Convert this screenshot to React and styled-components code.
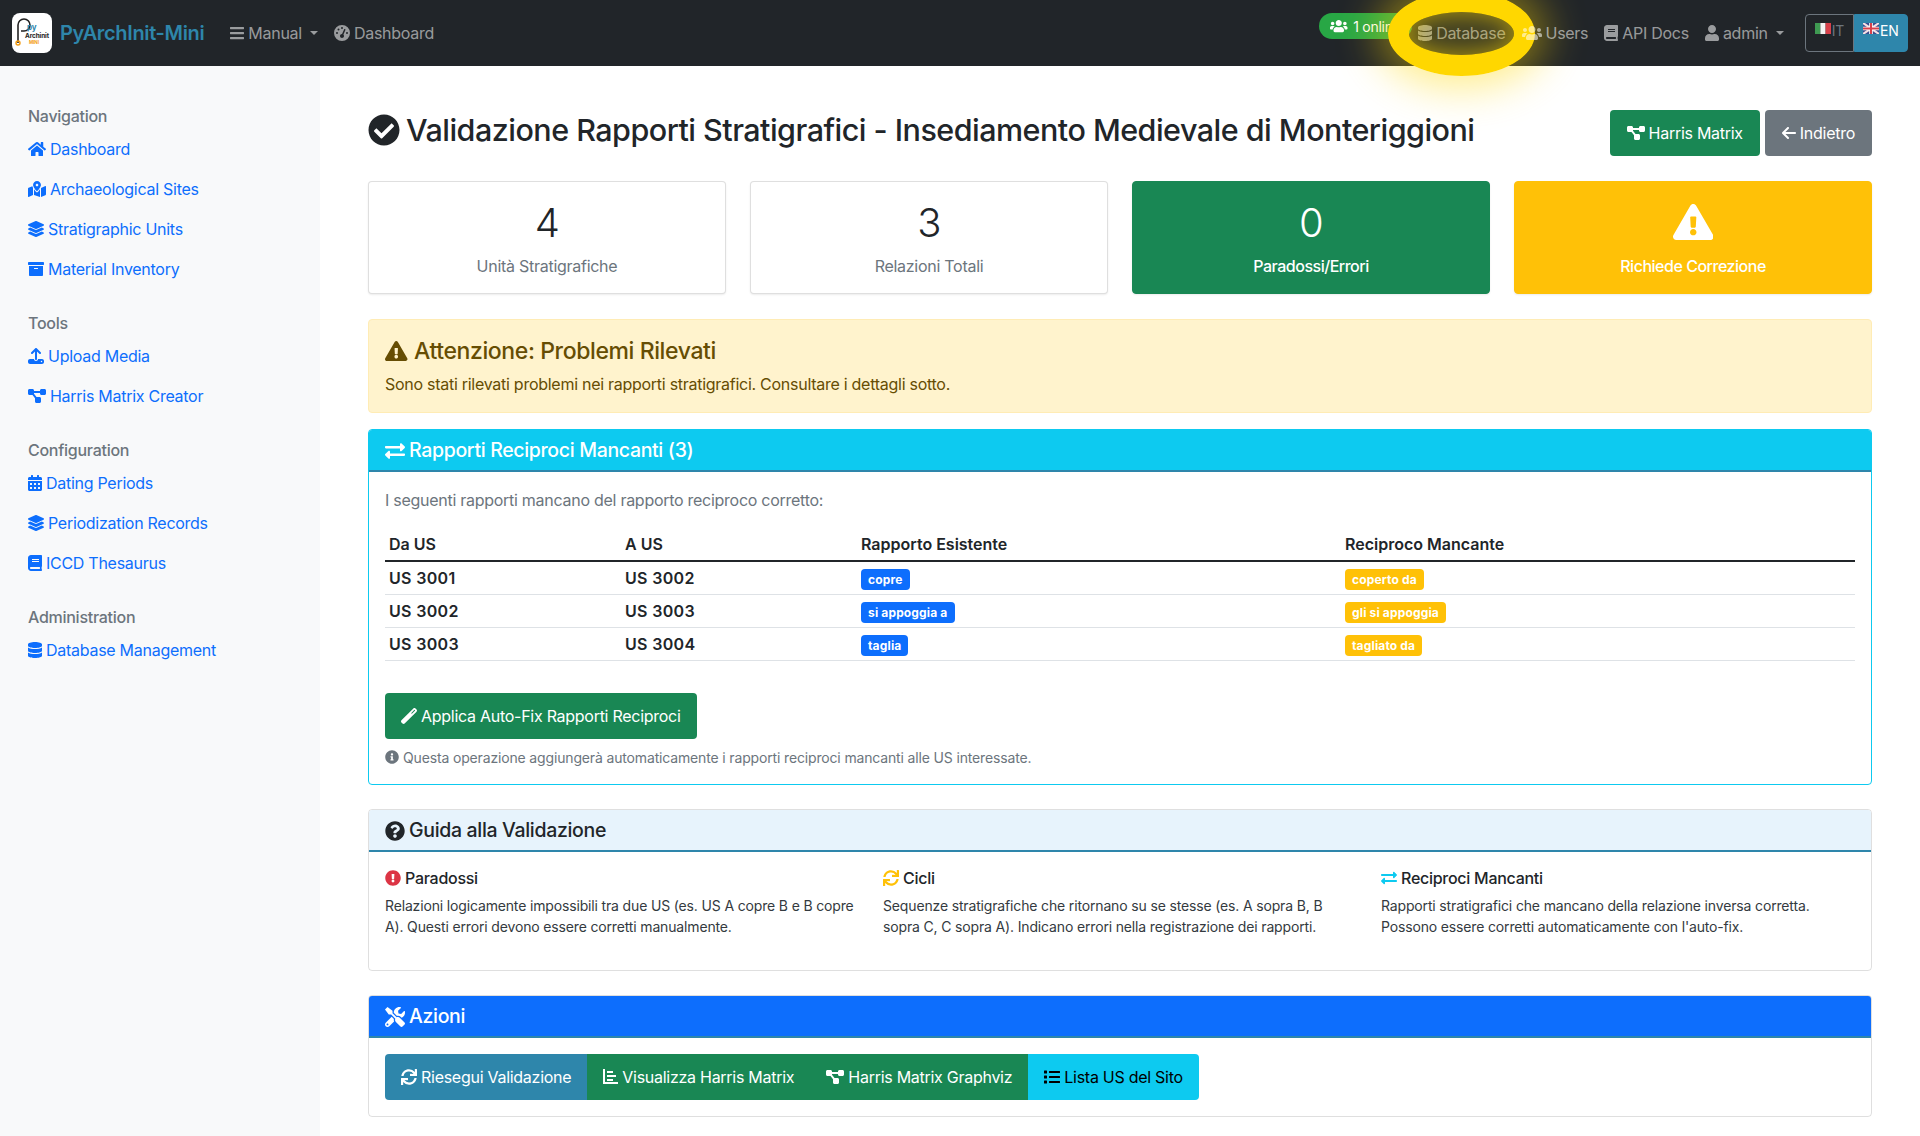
import React from "react";
import styled, { createGlobalStyle } from "styled-components";
import {
  FaBars, FaUsers, FaDatabase, FaBook, FaUser, FaHome, FaMapMarkedAlt,
  FaLayerGroup, FaArchive, FaCalendarAlt, FaCheckCircle,
  FaExclamationTriangle, FaExchangeAlt, FaInfoCircle, FaQuestionCircle,
  FaExclamationCircle, FaSync, FaTools, FaList,
} from "react-icons/fa";
import { FaUpload, FaWandMagic, FaDiagramProject, FaGaugeHigh, FaArrowLeft } from "react-icons/fa6";

const GlobalStyle = createGlobalStyle`
  * { box-sizing: border-box; letter-spacing: -0.017em; }
  html, body { margin: 0; padding: 0; background: #fff; }
  body {
    font-family: Inter, "Liberation Sans", sans-serif;
    font-size: 16px;
    line-height: 1.5;
    color: #212529;
    overflow: hidden;
  }
  svg { flex: none; }
`;

// font awesome glyphs are not square, react-icons squeezes them into 1em unless told otherwise
const glyph = (Icon, ratio) => styled(Icon)`
  width: ${ratio}em;
`;

const BarsIcon = glyph(FaBars, 0.875);
const UsersIcon = glyph(FaUsers, 1.25);
const DatabaseIcon = glyph(FaDatabase, 0.875);
const BookIcon = glyph(FaBook, 0.875);
const UserIcon = glyph(FaUser, 0.875);
const HomeIcon = glyph(FaHome, 1.125);
const MapIcon = glyph(FaMapMarkedAlt, 1.125);
const CalendarIcon = glyph(FaCalendarAlt, 0.875);
const DiagramIcon = glyph(FaDiagramProject, 1.125);
const WarningIcon = glyph(FaExclamationTriangle, 1.125);
const BackIcon = glyph(FaArrowLeft, 0.875);

const navItems = [
  { title: "Navigation", links: [
    { icon: HomeIcon, label: "Dashboard" },
    { icon: MapIcon, label: "Archaeological Sites" },
    { icon: FaLayerGroup, label: "Stratigraphic Units" },
    { icon: FaArchive, label: "Material Inventory" },
  ]},
  { title: "Tools", links: [
    { icon: FaUpload, label: "Upload Media" },
    { icon: DiagramIcon, label: "Harris Matrix Creator" },
  ]},
  { title: "Configuration", links: [
    { icon: CalendarIcon, label: "Dating Periods" },
    { icon: FaLayerGroup, label: "Periodization Records" },
    { icon: BookIcon, label: "ICCD Thesaurus" },
  ]},
  { title: "Administration", links: [
    { icon: DatabaseIcon, label: "Database Management" },
  ]},
];

const missing = [
  { from: "US 3001", to: "US 3002", rel: "copre", rec: "coperto da" },
  { from: "US 3002", to: "US 3003", rel: "si appoggia a", rec: "gli si appoggia" },
  { from: "US 3003", to: "US 3004", rel: "taglia", rec: "tagliato da" },
];

const AxisIcon = () => (
  <svg width="15" height="15" viewBox="0 0 15 15" fill="currentColor">
    <path d="M0 0h2v13h13v2H0z" />
    <path d="M4 2h6v2H4zM4 6h9v2H4zM4 10h6v2H4z" />
  </svg>
);

const App = () => (
  <Page>
    <GlobalStyle />
    <NavBar>
      <Brand>
        <Logo>
          <svg width="40" height="40" viewBox="0 0 40 40">
            <path d="M6 30V12a6 6 0 1 1 6 6H9" fill="none" stroke="#222" strokeWidth="1.6" />
            <circle cx="6" cy="30" r="2" fill="none" stroke="#f39c12" strokeWidth="1.4" />
            <text x="15" y="17" fontFamily="Inter" fontSize="8" fontWeight="700" fill="#2e86ab">py</text>
            <text x="13" y="25" fontFamily="Inter" fontSize="6.4" fontWeight="700" fill="#222">Archinit</text>
            <text x="17" y="31" fontFamily="Inter" fontSize="4.5" fontWeight="700" fill="#f39c12">MINI</text>
          </svg>
        </Logo>
        PyArchInit-Mini
      </Brand>
      <NavLink><BarsIcon /> Manual <Caret /></NavLink>
      <NavLink $gap="16px"><FaGaugeHigh /> Dashboard</NavLink>
      <NavRight>
        <OnlineBadge><UsersIcon /> 1 online</OnlineBadge>
        <NavLink><DatabaseIcon /> Database</NavLink>
        <NavLink $raised><UsersIcon /> Users</NavLink>
        <NavLink><BookIcon /> API Docs</NavLink>
        <NavLink><UserIcon /> admin <Caret /></NavLink>
        <LangGroup>
          <LangButton>
            <svg width="16" height="11" viewBox="0 0 16 11">
              <rect width="5.4" height="11" fill="#3f9a52" />
              <rect x="5.4" width="5.2" height="11" fill="#f4f4f4" />
              <rect x="10.6" width="5.4" height="11" fill="#d8404a" />
            </svg>
            IT
          </LangButton>
          <LangButton $active>
            <svg width="16" height="11" viewBox="0 0 16 11">
              <rect width="16" height="11" fill="#3a4a8c" />
              <path d="M0 0L16 11M16 0L0 11" stroke="#f6dfe2" strokeWidth="2.2" />
              <path d="M8 0V11M0 5.5H16" stroke="#fff" strokeWidth="3.6" />
              <path d="M8 0V11M0 5.5H16" stroke="#d8404a" strokeWidth="2" />
            </svg>
            EN
          </LangButton>
        </LangGroup>
      </NavRight>
      <Spotlight />
    </NavBar>
    <SplitView>
      <Sidebar>
        {navItems.map((group) => (
          <NavGroup key={group.title}>
            <GroupTitle>{group.title}</GroupTitle>
            {group.links.map((link) => (
              <SideLink key={link.label}><link.icon /> {link.label}</SideLink>
            ))}
          </NavGroup>
        ))}
      </Sidebar>
      <Content>
        <TitleRow>
          <Title><FaCheckCircle /> Validazione Rapporti Stratigrafici - Insediamento Medievale di Monteriggioni</Title>
          <TitleActions>
            <Button $bg="#198754"><DiagramIcon /> Harris Matrix</Button>
            <Button $bg="#6c757d"><BackIcon /> Indietro</Button>
          </TitleActions>
        </TitleRow>

        <StatsGrid>
          <StatCard>
            <StatValue>4</StatValue>
            <StatLabel>Unità Stratigrafiche</StatLabel>
          </StatCard>
          <StatCard>
            <StatValue>3</StatValue>
            <StatLabel>Relazioni Totali</StatLabel>
          </StatCard>
          <StatCard $bg="#198754">
            <StatValue>0</StatValue>
            <StatLabel $light>Paradossi/Errori</StatLabel>
          </StatCard>
          <StatCard $bg="#ffc107">
            <StatValue><WarningIcon /></StatValue>
            <StatLabel $light>Richiede Correzione</StatLabel>
          </StatCard>
        </StatsGrid>

        <Alert>
          <AlertTitle><WarningIcon /> Attenzione: Problemi Rilevati</AlertTitle>
          <AlertText>Sono stati rilevati problemi nei rapporti stratigrafici. Consultare i dettagli sotto.</AlertText>
        </Alert>

        <Card $border="#0dcaf0" $gap="24px">
          <CardHeader $bg="#0dcaf0" $color="#fff" $line="#2e86ab"><FaExchangeAlt /> Rapporti Reciproci Mancanti (3)</CardHeader>
          <CardBody>
            <Lead>I seguenti rapporti mancano del rapporto reciproco corretto:</Lead>
            <Table>
              <colgroup>
                <col width="236" />
                <col width="236" />
                <col width="484" />
                <col />
              </colgroup>
              <thead>
                <tr>
                  <Th>Da US</Th>
                  <Th>A US</Th>
                  <Th>Rapporto Esistente</Th>
                  <Th>Reciproco Mancante</Th>
                </tr>
              </thead>
              <tbody>
                {missing.map((row) => (
                  <tr key={row.from}>
                    <Td><strong>{row.from}</strong></Td>
                    <Td><strong>{row.to}</strong></Td>
                    <Td><Badge $bg="#0d6efd">{row.rel}</Badge></Td>
                    <Td><Badge $bg="#ffc107">{row.rec}</Badge></Td>
                  </tr>
                ))}
              </tbody>
            </Table>
            <Button $bg="#198754"><FaWandMagic /> Applica Auto-Fix Rapporti Reciproci</Button>
            <Hint><FaInfoCircle /> Questa operazione aggiungerà automaticamente i rapporti reciproci mancanti alle US interessate.</Hint>
          </CardBody>
        </Card>

        <Card $gap="24px">
          <CardHeader $bg="#e7f3fc" $line="#2e86ab"><FaQuestionCircle /> Guida alla Validazione</CardHeader>
          <GuideGrid>
            <div>
              <GuideTitle $icon="#dc3545"><FaExclamationCircle /> Paradossi</GuideTitle>
              <GuideText>Relazioni logicamente impossibili tra due US (es. US A copre B e B copre A). Questi errori devono essere corretti manualmente.</GuideText>
            </div>
            <div>
              <GuideTitle $icon="#ffc107"><FaSync /> Cicli</GuideTitle>
              <GuideText>Sequenze stratigrafiche che ritornano su se stesse (es. A sopra B, B sopra C, C sopra A). Indicano errori nella registrazione dei rapporti.</GuideText>
            </div>
            <div>
              <GuideTitle $icon="#0dcaf0"><FaExchangeAlt /> Reciproci Mancanti</GuideTitle>
              <GuideText>Rapporti stratigrafici che mancano della relazione inversa corretta. Possono essere corretti automaticamente con l'auto-fix.</GuideText>
            </div>
          </GuideGrid>
        </Card>

        <Card>
          <CardHeader $bg="#0d6efd" $color="#fff" $line="#2e86ab"><FaTools /> Azioni</CardHeader>
          <CardBody>
            <ButtonGroup>
              <Button $bg="#2e86ab"><FaSync /> Riesegui Validazione</Button>
              <Button $bg="#198754"><AxisIcon /> Visualizza Harris Matrix</Button>
              <Button $bg="#198754"><DiagramIcon /> Harris Matrix Graphviz</Button>
              <Button $bg="#0dcaf0" $color="#000"><FaList /> Lista US del Sito</Button>
            </ButtonGroup>
          </CardBody>
        </Card>
      </Content>
    </SplitView>
  </Page>
);

const Page = styled.div`
  height: 1136px;
  display: flex;
  flex-direction: column;
`;

const NavBar = styled.nav`
  position: relative;
  height: 66px;
  flex: none;
  display: flex;
  align-items: center;
  padding: 0 12px;
  background: #212529;
`;

const Brand = styled.div`
  display: flex;
  align-items: center;
  gap: 8px;
  margin-right: 26px;
  font-size: 20px;
  font-weight: 600;
  color: #2e86ab;
`;

const Logo = styled.div`
  width: 40px;
  height: 40px;
  border-radius: 8px;
  background: #fff;
  overflow: hidden;
  svg { display: block; }
`;

const NavLink = styled.a`
  display: flex;
  align-items: center;
  gap: 4px;
  margin-left: ${(p) => p.$gap || "0"};
  font-size: 16px;
  color: rgba(255, 255, 255, 0.55);
  white-space: nowrap;
  ${(p) => p.$raised && "position: relative; z-index: 6;"}
`;

const Caret = styled.span`
  width: 0;
  height: 0;
  margin-left: 4px;
  border-top: 4.5px solid currentColor;
  border-left: 4.5px solid transparent;
  border-right: 4.5px solid transparent;
`;

const NavRight = styled.div`
  margin-left: auto;
  display: flex;
  align-items: center;
  gap: 16px;
`;

const OnlineBadge = styled.span`
  display: flex;
  align-items: center;
  gap: 5.5px;
  height: 26px;
  width: 93px;
  margin-top: -14px;
  margin-right: -10px;
  padding-left: 11px;
  border-radius: 13px;
  background: #28a745;
  color: #fff;
  font-size: 14px;
  white-space: nowrap;
  overflow: hidden;
`;

const LangGroup = styled.div`
  display: flex;
  height: 38px;
  margin-left: 5.5px;
`;

const LangButton = styled.span`
  display: flex;
  align-items: flex-start;
  padding: 5px 8.5px 0;
  gap: 1px;
  font-size: 14px;
  color: ${(p) => (p.$active ? "#fff" : "#6c757d")};
  background: ${(p) => (p.$active ? "#2e86ab" : "transparent")};
  border: 1px solid ${(p) => (p.$active ? "#2e86ab" : "#6c757d")};
  border-radius: ${(p) => (p.$active ? "0 4px 4px 0" : "4px 0 0 4px")};
  svg { margin-top: 3px; }
`;

/* yellow tutorial highlight that sits over the navbar */
const Spotlight = styled.div`
  position: absolute;
  left: 1388px;
  top: -9px;
  width: 147px;
  height: 85px;
  border: 21px solid #ffd700;
  border-radius: 50%;
  background: rgba(255, 215, 0, 0.16);
  box-shadow: 0 0 40px 12px rgba(255, 215, 0, 0.45), inset 0 0 18px 4px rgba(255, 215, 0, 0.45);
  pointer-events: none;
  z-index: 5;
`;

const SplitView = styled.div`
  flex: 1;
  display: flex;
  min-height: 0;
`;

const Sidebar = styled.aside`
  width: 320px;
  flex: none;
  padding: 38px 28px 0;
  background: #f8f9fa;
`;

const NavGroup = styled.div`
  margin-bottom: 22px;
`;

const GroupTitle = styled.div`
  font-size: 16px;
  font-weight: 500;
  line-height: 24px;
  margin-bottom: 1px;
  color: #6c757d;
`;

const SideLink = styled.a`
  display: flex;
  align-items: center;
  gap: 4px;
  height: 40px;
  font-size: 16px;
  color: #0d6efd;
  white-space: nowrap;
`;

const Content = styled.main`
  flex: 1;
  min-width: 0;
  padding: 44px 48px 0;
`;

const TitleRow = styled.div`
  display: flex;
  align-items: flex-start;
  justify-content: space-between;
  margin-bottom: 25px;
`;

const Title = styled.h2`
  margin: 1px 0 0;
  display: flex;
  align-items: center;
  gap: 6px;
  font-size: 30.5px;
  font-weight: 500;
  line-height: 38px;
  white-space: nowrap;
  svg { font-size: 32px; }
`;

const TitleActions = styled.div`
  display: flex;
  gap: 5px;
  button { padding: 0 17px; }
`;

const Button = styled.button`
  display: inline-flex;
  align-items: center;
  gap: 4px;
  height: 46px;
  padding: 0 16px;
  border: none;
  border-radius: 4px;
  font-family: inherit;
  font-size: 16px;
  white-space: nowrap;
  color: ${(p) => p.$color || "#fff"};
  background: ${(p) => p.$bg};
`;

const StatsGrid = styled.div`
  display: grid;
  grid-template-columns: repeat(4, 1fr);
  gap: 24px;
  margin-bottom: 25px;
`;

const StatCard = styled.div`
  height: 113px;
  padding-top: 17px;
  text-align: center;
  border: 1px solid ${(p) => p.$bg || "rgba(0, 0, 0, 0.125)"};
  border-radius: 4px;
  color: ${(p) => (p.$bg ? "#fff" : "#212529")};
  background: ${(p) => p.$bg || "#fff"};
  box-shadow: 0 1px 2px rgba(0, 0, 0, 0.08);
`;

const StatValue = styled.div`
  height: 48px;
  font-size: 40px;
  font-weight: 300;
  line-height: 48px;
  padding-top: 0;
  svg { display: block; margin: 0 auto; font-size: 36px; transform: translateY(5px); }
`;

const StatLabel = styled.div`
  margin-top: 7px;
  font-size: 16px;
  font-weight: ${(p) => (p.$light ? 500 : 400)};
  letter-spacing: ${(p) => (p.$light ? "-0.03em" : "-0.017em")};
  color: ${(p) => (p.$light ? "#fff" : "#6c757d")};
`;

const Alert = styled.div`
  height: 94px;
  padding: 16px;
  margin-bottom: 16px;
  border: 1px solid #ffecb5;
  border-radius: 4px;
  background: #fff3cd;
  color: #664d03;
`;

const AlertTitle = styled.h4`
  display: flex;
  align-items: center;
  gap: 6.5px;
  margin: 0 0 6px;
  font-size: 23px;
  font-weight: 500;
  line-height: 30px;
  svg { font-size: 20px; }
`;

const AlertText = styled.p`
  margin: 0;
  font-size: 16px;
`;

const Card = styled.section`
  margin-bottom: ${(p) => p.$gap || "0"};
  border: 1px solid ${(p) => p.$border || "rgba(0, 0, 0, 0.125)"};
  border-radius: 4px;
  overflow: hidden;
`;

const CardHeader = styled.h5`
  display: flex;
  align-items: center;
  gap: 4px;
  height: 42px;
  margin: 0;
  padding: 2px 16px 0;
  font-size: 19.5px;
  font-weight: 500;
  color: ${(p) => p.$color || "#212529"};
  background: ${(p) => p.$bg};
  border-bottom: 2px solid ${(p) => p.$line};
  svg { font-size: 20px; }
`;

const CardBody = styled.div`
  padding: 16px;
`;

const Lead = styled.p`
  margin: 0 0 15px;
  color: #6c757d;
`;

const Table = styled.table`
  width: 100%;
  border-collapse: collapse;
  margin-bottom: 32px;
`;

const Th = styled.th`
  height: 34px;
  padding: 0 4px;
  text-align: left;
  font-weight: 600;
  letter-spacing: 0;
  border-bottom: 2px solid #212529;
`;

const Td = styled.td`
  height: 33px;
  padding: 0 4px;
  border-bottom: 1px solid #dee2e6;
  strong { font-weight: 600; letter-spacing: 0.02em; }
`;

const Badge = styled.span`
  display: inline-block;
  padding: 3px 7px;
  border-radius: 4px;
  font-size: 12px;
  font-weight: 700;
  line-height: 15px;
  letter-spacing: 0.013em;
  color: #fff;
  background: ${(p) => p.$bg};
  vertical-align: middle;
`;

const Hint = styled.p`
  display: flex;
  align-items: center;
  gap: 4px;
  margin: 8px 0 0;
  font-size: 14px;
  letter-spacing: -0.011em;
  color: #6c757d;
`;

const GuideGrid = styled.div`
  display: grid;
  grid-template-columns: repeat(3, 1fr);
  column-gap: 24px;
  padding: 14px 16px 33px;
`;

const GuideTitle = styled.h6`
  display: flex;
  align-items: center;
  gap: 4px;
  margin: 0 0 5px;
  font-size: 16px;
  font-weight: 500;
  line-height: 24px;
  svg { color: ${(p) => p.$icon}; }
`;

const GuideText = styled.p`
  margin: 0;
  font-size: 14px;
  line-height: 21px;
  letter-spacing: -0.011em;
  color: #343a40;
`;

const ButtonGroup = styled.div`
  display: inline-flex;
  button { border-radius: 0; }
  button:first-child { border-radius: 4px 0 0 4px; }
  button:last-child { border-radius: 0 4px 4px 0; }
`;

export default App;
